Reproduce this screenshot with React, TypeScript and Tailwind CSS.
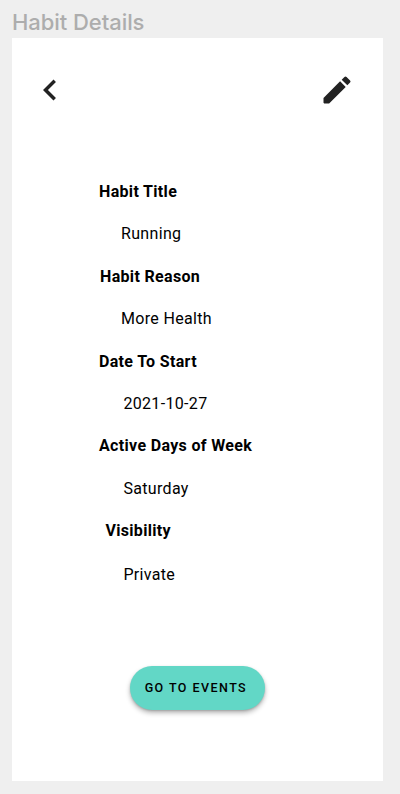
const fields = [
  { label: 'Habit Title', value: 'Running', row: 'h-[85px]', l: 'h-[42px] pl-[87px]', v: 'pl-[109px]' },
  { label: 'Habit Reason', value: 'More Health', row: 'h-[85px]', l: 'h-[42px] pl-[88px]', v: 'pl-[109px]' },
  { label: 'Date To Start', value: '2021-10-27', row: 'h-[84px]', l: 'h-[42px] pl-[87px]', v: 'pl-[111.4px]' },
  { label: 'Active Days of Week', value: 'Saturday', row: 'h-[85px]', l: 'h-[43px] pl-[87px]', v: 'pl-[111.4px]' },
  { label: 'Visibility', value: 'Private', row: 'h-[86px]', l: 'h-[44px] pl-[93.4px]', v: 'pl-[111.4px]' },
];

export default function App() {
  return (
    <div className="h-[794px] w-[400px] overflow-hidden bg-[#efefef] px-3 font-['Roboto',sans-serif] text-black">
      <h1 className="h-[38px] pt-[10px] font-['Inter',sans-serif] text-[22px] leading-6 font-medium tracking-[-0.06px] text-[#adadad]">Habit Details</h1>
      <main className="h-[743px] w-[371px] bg-white">
        <header className="flex h-[104px] items-center justify-between pr-[28px] pl-[17px]">
          <button aria-label="Back">
            <svg viewBox="0 0 24 24" className="h-[42px] w-[42px]" fill="#222"><path d="M15.41 7.41 14 6l-6 6 6 6 1.41-1.41L10.83 12z" /></svg>
          </button>
          <button aria-label="Edit">
            <svg viewBox="0 0 24 24" className="h-9 w-9" fill="#222"><path d="M3 17.25V20.5L3.5 21h3.25L17.81 9.94l-3.75-3.75L3 17.25zM20.71 7.04a1 1 0 0 0 0-1.41l-2.34-2.34a1 1 0 0 0-1.41 0l-1.83 1.83 3.75 3.75 1.83-1.83z" /></svg>
          </button>
        </header>
        <dl className="pt-[38px] text-base leading-6 tracking-[0.33px]">
          {fields.map((f) => (
            <div key={f.label} className={f.row}>
              <dt className={`font-bold ${f.l}`}>{f.label}</dt>
              <dd className={f.v}>{f.value}</dd>
            </div>
          ))}
        </dl>
        <button className="mt-[61px] ml-[118.4px] h-11 w-[135px] rounded-full bg-[#62d7c6] pr-[4px] text-[12.5px] font-medium tracking-[1.45px] shadow-[0_3px_5px_rgba(0,0,0,0.28),0_1px_2px_rgba(0,0,0,0.16)]">GO TO EVENTS</button>
      </main>
    </div>
  );
}
